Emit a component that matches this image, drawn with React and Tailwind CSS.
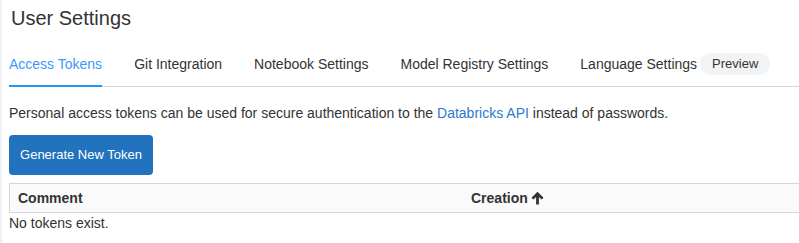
const tabs = [
  { label: 'Access Tokens', active: true },
  { label: 'Git Integration' },
  { label: 'Notebook Settings' },
  { label: 'Model Registry Settings' },
  { label: 'Language Settings', badge: 'Preview' },
]

// bold up arrow, like the sort indicator in the header
function SortUp() {
  return (
    <svg width="13" height="14" viewBox="0 0 12 13" className="shrink-0">
      <path d="M6 0.6 L11.6 6.2 L9.8 8 L7.3 5.5 L7.3 12.6 L4.7 12.6 L4.7 5.5 L2.2 8 L0.4 6.2 Z" fill="#333" />
    </svg>
  )
}

export default function App() {
  return (
    <div className="min-h-screen bg-white border-l-2 border-[#edf1f6] font-['Liberation_Sans',Arial,sans-serif] text-[#333]">
      <div className="pl-[7px]">
        {/* header */}
        <h1 className="pl-[2px] pt-[6px] text-[20px] leading-[24px] font-normal">User Settings</h1>

        {/* tabs */}
        <div className="mt-[24px] flex items-start border-b border-[#d4d4d4]">
          {tabs.map(t => (
            <div
              key={t.label}
              className={`-mb-px mr-[32px] flex shrink-0 items-center whitespace-nowrap pb-[11px] text-[14px] leading-[20px] ${
                t.active ? 'border-b-2 border-[#2196f3] text-[#3b9af5]' : 'border-b-2 border-transparent'
              }`}
            >
              <span>{t.label}</span>
              {t.badge && (
                <span className="ml-[3px] -my-[1px] rounded-full bg-[#f1f3f5] px-[12px] text-[13px] leading-[22px] text-[#333]">
                  {t.badge}
                </span>
              )}
            </div>
          ))}
        </div>

        {/* description */}
        <p className="mt-[16px] whitespace-nowrap text-[14px] leading-[20px]">
          Personal access tokens can be used for secure authentication to the{' '}
          <a className="text-[#2b7bcd]">Databricks API</a> instead of passwords.
        </p>

        <button
          type="button"
          className="mt-[12px] h-[40px] w-[144px] rounded-[4px] bg-[#2272be] text-[13px] text-white"
        >
          Generate New Token
        </button>

        {/* table */}
        <div className="mt-[8px] flex h-[30px] items-center border border-r-0 border-[#d6d6d6] bg-[#fafafa] text-[14px] font-bold">
          <div className="w-[453px] pl-[8px]">Comment</div>
          <div className="flex items-center gap-[3px] pl-[8px]">
            Creation
            <SortUp />
          </div>
        </div>
        <div className="text-[14px] leading-[20px]">No tokens exist.</div>
      </div>
    </div>
  )
}
